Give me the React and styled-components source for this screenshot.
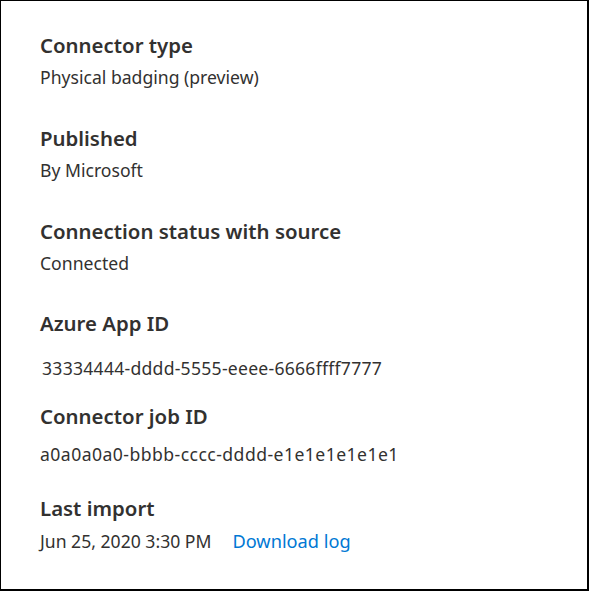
import React from 'react'
import styled, { createGlobalStyle } from 'styled-components'

const GlobalStyle = createGlobalStyle`
  html, body {
    margin: 0;
    padding: 0;
    background: #ffffff;
  }
  body {
    font-family: "Segoe UI", "Noto Sans", "Open Sans", sans-serif;
    color: #323130;
  }
`

const details = [
  { label: 'Connector type', value: 'Physical badging (preview)', gap: 6, after: 35 },
  { label: 'Published', value: 'By Microsoft', gap: 6, after: 35 },
  { label: 'Connection status with source', value: 'Connected', gap: 6, after: 34 },
  { label: 'Azure App ID', value: '33334444-dddd-5555-eeee-6666ffff7777', gap: 19, after: 22, indent: 2, spacing: 0.25 },
  { label: 'Connector job ID', value: 'a0a0a0a0-bbbb-cccc-dddd-e1e1e1e1e1e1', gap: 12, after: 28, spacing: 0.45 },
]

const App = () => {
  return (
    <>
      <GlobalStyle />
      <Panel>
        {details.map((d) => (
          <Section key={d.label} after={d.after}>
            <Label>{d.label}</Label>
            <Value gap={d.gap} indent={d.indent} spacing={d.spacing}>{d.value}</Value>
          </Section>
        ))}
        <Section after={0}>
          <Label>Last import</Label>
          <ImportRow>
            <Value gap={7}>Jun 25, 2020 3:30 PM</Value>
            <Link href="#">Download log</Link>
          </ImportRow>
        </Section>
      </Panel>
    </>
  )
}

export default App

const Panel = styled.div`
  box-sizing: border-box;
  width: 589px;
  height: 591px;
  border-top: 1px solid #000;
  border-left: 1px solid #000;
  border-right: 2px solid #000;
  border-bottom: 2px solid #000;
  padding: 30px 0 0 39px;
  display: flex;
  flex-direction: column;
`

const Section = styled.div`
  display: flex;
  flex-direction: column;
  margin-bottom: ${(p) => p.after}px;
`

const Label = styled.div`
  font-size: 20.4px;
  font-weight: 600;
  line-height: 28px;
  color: #323130;
`

const Value = styled.div`
  font-size: 17.6px;
  line-height: 24px;
  margin-top: ${(p) => p.gap}px;
  padding-left: ${(p) => p.indent || 0}px;
  letter-spacing: ${(p) => p.spacing || 0}px;
  color: #323130;
`

const ImportRow = styled.div`
  display: flex;
  align-items: flex-end;
  gap: 21px;
`

const Link = styled.a`
  font-size: 18.2px;
  line-height: 24px;
  color: #0078d4;
  text-decoration: none;
`
